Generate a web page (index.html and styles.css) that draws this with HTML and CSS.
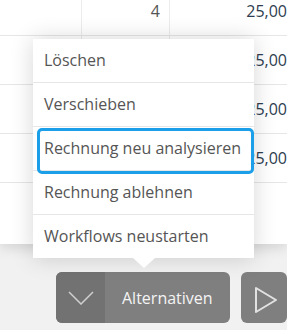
FILE: index.html
```html
<!DOCTYPE html>
<html lang="de">
<head>
    <meta charset="UTF-8">
    <meta name="viewport" content="width=device-width, initial-scale=1.0">
    <title>Rechnungen</title>
    <link rel="stylesheet" href="styles.css">
</head>
<body>
    <!-- Invoice positions -->
    <section class="table-panel">
        <table class="positions">
            <tbody>
                <tr><td></td><td class="qty">4</td><td class="amount">25,00</td></tr>
                <tr><td></td><td class="qty"></td><td class="amount">25,00</td></tr>
                <tr><td></td><td class="qty"></td><td class="amount">25,00</td></tr>
                <tr><td></td><td class="qty"></td><td class="amount">25,00</td></tr>
                <tr><td></td><td class="qty"></td><td class="amount"></td></tr>
            </tbody>
        </table>
    </section>

    <!-- Action bar -->
    <div class="actions">
        <div class="dropdown">
            <ul class="menu">
                <li class="menu-item">Löschen</li>
                <li class="menu-item">Verschieben</li>
                <li class="menu-item focused">Rechnung neu analysieren</li>
                <li class="menu-item">Rechnung ablehnen</li>
                <li class="menu-item">Workflows neustarten</li>
            </ul>
            <div class="btn-group">
                <span class="btn-toggle">
                    <svg width="26" height="14" viewBox="0 0 26 14"><path d="M1 1 L13 13 L25 1" fill="none" stroke="#cfcfcf" stroke-width="1.5"/></svg>
                </span>
                <span class="btn-label">Alternativen</span>
            </div>
        </div>
        <div class="btn-play">
            <svg width="24" height="28" viewBox="0 0 24 28"><path d="M2 2 L22 14 L2 26 Z" fill="none" stroke="#e2e2e2" stroke-width="2" stroke-linejoin="round"/></svg>
        </div>
    </div>
</body>
</html>
```

FILE: styles.css
```css
/* General styling */
body {
    margin: 0;
    font-family: "Open Sans", Arial, sans-serif;
    background-color: #f1f1f1;
    overflow: hidden;
    height: 330px;
}

.table-panel {
    background-color: #fff;
    height: 244px;
    overflow: hidden;
    box-shadow: 0 4px 12px rgba(0, 0, 0, 0.12);
}

.positions {
    border-collapse: collapse;
    width: 300px;
    margin-top: -13px;
    font-size: 16px;
}

.positions td {
    height: 48px;
    padding: 0 9px 0 0;
    border-bottom: 1px solid #e6e6e6;
    border-right: 1px solid #ececec;
    text-align: right;
}

.positions tr:last-child td {
    border-bottom: none;
}

.positions td:first-child {
    width: 72px;
}

.positions td.qty {
    width: 78px;
    color: #555;
}

.positions td.amount {
    color: #2e3d4f;
    padding-right: 13px;
    border-right: none;
}

.actions {
    display: flex;
    gap: 11px;
    margin-top: 28px;
    padding-left: 56px;
}

.dropdown {
    position: relative;
}

.menu {
    position: absolute;
    left: -23px;
    bottom: calc(100% + 14px);
    width: 221px;
    margin: 0;
    padding: 0;
    list-style: none;
    background-color: #fff;
    box-shadow: 0 0 22px rgba(0, 0, 0, 0.16);
}

.menu::after {
    content: "";
    position: absolute;
    top: 100%;
    left: 100px;
    border-left: 11px solid transparent;
    border-right: 11px solid transparent;
    border-top: 10px solid #fff;
}

.menu-item {
    position: relative;
    height: 43px;
    line-height: 43px;
    padding-left: 11px;
    font-size: 16px;
    color: #555;
    border-bottom: 1px solid #e6e6e6;
}

.menu-item:last-child {
    border-bottom: none;
}

.menu-item.focused::after {
    content: "";
    position: absolute;
    top: 1px;
    bottom: -4px;
    left: 4px;
    right: 0;
    border: 3px solid #1b9fe9;
    border-radius: 5px;
}

.btn-group {
    display: flex;
    height: 51px;
    width: 174px;
    background-color: #7f7f7f;
    border-radius: 6px;
}

.btn-toggle {
    display: flex;
    align-items: center;
    justify-content: center;
    width: 49px;
    background-color: #727272;
    border-radius: 6px 0 0 6px;
}

.btn-label {
    display: flex;
    align-items: center;
    padding-left: 17px;
    font-size: 16px;
    color: #f4f4f4;
}

.btn-play {
    display: flex;
    align-items: center;
    width: 50px;
    height: 51px;
    padding: 4px 0 0 13px;
    box-sizing: border-box;
    background-color: #7f7f7f;
    border-radius: 6px;
}
```
